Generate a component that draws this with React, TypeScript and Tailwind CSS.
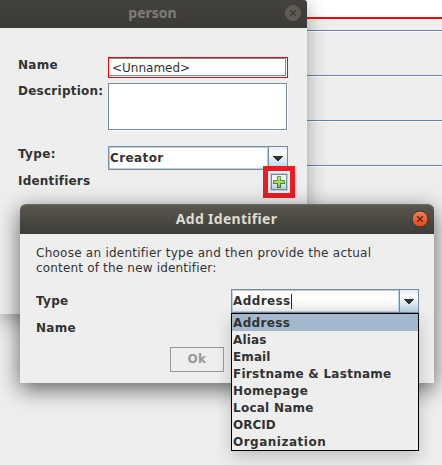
import React from "react";

const IDENTIFIER_TYPES = [
  { name: "Address", tracking: "tracking-[0.35px]" },
  { name: "Alias", tracking: "tracking-[0.15px]" },
  { name: "Email", tracking: "tracking-[0.1px]" },
  { name: "Firstname & Lastname", tracking: "tracking-[0.27px]" },
  { name: "Homepage", tracking: "tracking-[0.35px]" },
  { name: "Local Name", tracking: "tracking-[0.25px]" },
  { name: "ORCID", tracking: "tracking-[0px]" },
  { name: "Organization", tracking: "tracking-[0.5px]" },
];

function CloseButton({ active }: { active: boolean }) {
  return (
    <svg width="18" height="18" viewBox="0 0 18 18" className="shrink-0">
      <defs>
        <linearGradient id="closeActive" x1="0" y1="0" x2="0" y2="1">
          <stop offset="0" stopColor="#f3805f" />
          <stop offset="0.5" stopColor="#ee6138" />
          <stop offset="1" stopColor="#dd4814" />
        </linearGradient>
      </defs>
      <circle
        cx="9"
        cy="9"
        r={active ? 8 : 7.5}
        fill={active ? "url(#closeActive)" : "#5e5c55"}
        stroke={active ? "#34332e" : "#5e5c55"}
        strokeWidth="1"
      />
      <path d="M6.2 6.2L11.8 11.8M11.8 6.2L6.2 11.8" stroke={active ? "#432a1c" : "#3b3a36"} strokeWidth="1.3" />
    </svg>
  );
}

function Combo({ value, className, caret, focused }: { value: string; className: string; caret?: boolean; focused?: boolean }) {
  return (
    <div className={`flex h-6 border border-[#7a8a99] ${className}`}>
      <div
        className={`flex min-w-0 grow items-center border border-[#b8cfe5] ${
          focused ? "bg-linear-to-b from-white from-40% to-[#eeeeee]" : "bg-white"
        }`}
      >
        <span className="mt-px leading-[17px] tracking-[0.4px]">{value}</span>
        {caret && <span className="h-[15px] w-px bg-[#222222]" />}
      </div>
      <div className="flex w-[19px] shrink-0 items-center justify-center border-l border-[#7a8a99] bg-linear-to-b from-[#e4edf6] via-white via-30% to-[#b8cfe5]">
        <svg width="10" height="5" viewBox="0 0 10 5" shapeRendering="crispEdges" className="mt-px">
          <path d="M0 0H10V1H9V2H8V3H7V4H6V5H4V4H3V3H2V2H1V1H0Z" fill="#333333" />
        </svg>
      </div>
    </div>
  );
}

function AddButton() {
  return (
    <div className="ml-[155px] flex size-8 items-center justify-center border-[5px] border-[#ed1c24] bg-[#eeeeee]">
      <div className="size-[18px] border border-[#b8cfe5]">
        <div className="flex size-4 items-center justify-center border border-[#7a8a99] bg-linear-to-b from-[#eaf2f9] via-white via-30% to-[#b8cfe5]">
          <svg width="12" height="12" viewBox="0 0 12 12" shapeRendering="crispEdges">
            <defs>
              <linearGradient id="plusEdge" x1="0" y1="0" x2="0" y2="1">
                <stop offset="0" stopColor="#57b669" />
                <stop offset="1" stopColor="#1d793b" />
              </linearGradient>
              <linearGradient id="plusFill" x1="0" y1="0" x2="0" y2="1">
                <stop offset="0" stopColor="#d6d970" />
                <stop offset="0.5" stopColor="#c8d04a" />
                <stop offset="1" stopColor="#92bf42" />
              </linearGradient>
            </defs>
            <path d="M4 0H8V4H12V8H8V12H4V8H0V4H4Z" fill="url(#plusEdge)" />
            <path d="M5 1H7V5H11V7H7V11H5V7H1V5H5Z" fill="url(#plusFill)" />
          </svg>
        </div>
      </div>
    </div>
  );
}

function PersonWindow() {
  return (
    <section className="absolute top-0 left-0 h-[314px] w-[307px] rounded-tr-[3px] bg-[#eeeeee] shadow-[0_6px_20px_rgba(0,0,0,0.35)]">
      <header className="flex h-7 items-center rounded-tr-[3px] bg-linear-to-b from-[#43423d] to-[#3b3a36] pr-[5px] pb-[2px]">
        <h1 className="-mt-px grow pl-[21px] text-center font-['Noto_Sans'] text-[14px] font-bold text-[#807d78]">person</h1>
        <CloseButton active={false} />
      </header>
      <div className="grid grid-cols-[90px_180px] pt-[28px] pl-[18px]">
        <div className="mt-px tracking-[0.3px]">Name</div>
        <div className="mt-px h-[21px] border border-[#ff0000] bg-white pr-[2px] pb-[2px]">
          <div className="h-[18px] w-[177px] border-t border-r border-b border-[#7a8a99] pl-[3px] leading-[18px] font-normal">
            &lt;Unnamed&gt;
          </div>
        </div>
        <div className="mt-[5px] tracking-[0.25px]">Description:</div>
        <div className="mt-[5px] h-[48px] border-r border-b border-white">
          <div className="h-[47px] border border-[#7a8a99] bg-white" />
        </div>
        <div className="mt-[15px] tracking-[0.35px]">Type:</div>
        <Combo value="Creator" className="mt-[15px]" />
        <div className="mt-[3px] tracking-[0.2px]">Identifiers</div>
        <div className="-mt-1">
          <AddButton />
        </div>
      </div>
    </section>
  );
}

function IdentifierDialog() {
  return (
    <section className="absolute top-[204px] left-5 h-[179px] w-[414px] rounded-t-md bg-[#eeeeee] shadow-[0_6px_22px_rgba(0,0,0,0.6)]">
      <header className="flex h-[30px] items-center rounded-t-md border-t border-[#6b695f] bg-linear-to-b from-[#59574e] to-[#3d3c37] pr-[5px] pb-px">
        <h2 className="-mt-px grow pl-[22px] text-center font-['Noto_Sans'] text-[14px] font-bold tracking-[0.3px] text-[#dfdbd2]">
          Add Identifier
        </h2>
        <CloseButton active />
      </header>
      <p className="pt-[12px] pl-4 leading-[15px] font-normal tracking-[0.25px]">
        Choose an identifier type and then provide the actual
        <br />
        <span className="tracking-[0.18px]">content of the new identifier:</span>
      </p>
      <div className="grid grid-cols-[195px_188px] pt-[13px] pl-4">
        <div className="mt-[4px] tracking-[0.3px]">Type</div>
        <Combo value="Address" className="" caret focused />
        <div className="mt-[7px] tracking-[0.3px]">Name</div>
      </div>
      <button className="mt-[10px] ml-[150px] flex h-[25px] w-[54px] items-center justify-center border border-[#999999] font-bold tracking-[0.4px] text-[#999999]">
        Ok
      </button>
    </section>
  );
}

function TypeList() {
  return (
    <ul className="absolute top-[313px] left-[231px] w-[188px] border border-black bg-[#eeeeee] shadow-[0_6px_16px_rgba(0,0,0,0.2)]">
      {IDENTIFIER_TYPES.map((type, index) => (
        <li key={type.name} className={`h-[17px] pl-px leading-[19px] ${type.tracking} ${index === 0 ? "bg-[#a3b8cc]" : ""}`}>
          {type.name}
        </li>
      ))}
    </ul>
  );
}

export default function App() {
  return (
    <main className="relative h-[465px] w-[442px] overflow-hidden bg-[#eeeeee] font-['DejaVu_Sans',sans-serif] text-[12px] leading-[17px] font-bold whitespace-nowrap text-[#333333]">
      <div className="h-[19px] border-b-2 border-[#ff0000] bg-white" />
      <div className="h-[11px]" />
      {[0, 1, 2, 3].map((row) => (
        <div key={row} className="h-[45px] border-t border-[#6382bf]">
          <div className="h-px bg-white" />
        </div>
      ))}
      <PersonWindow />
      <IdentifierDialog />
      <TypeList />
    </main>
  );
}
